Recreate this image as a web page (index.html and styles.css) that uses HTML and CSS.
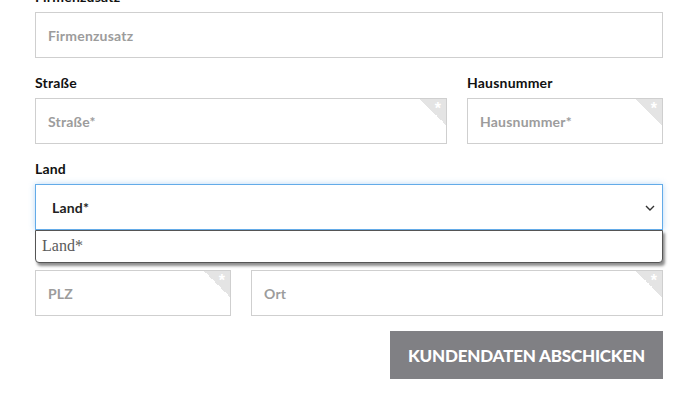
FILE: index.html
```html
<!DOCTYPE html>
<html lang="de">
<head>
    <meta charset="UTF-8">
    <meta name="viewport" content="width=device-width, initial-scale=1.0">
    <title>Kundendaten</title>
    <link rel="stylesheet" href="styles.css">
</head>
<body>
    <form class="customer-form">
        <div class="row">
            <div class="field">
                <label>Firmenzusatz</label>
                <div class="input-wrap">
                    <input type="text" placeholder="Firmenzusatz">
                </div>
            </div>
        </div>

        <div class="row split">
            <div class="field">
                <label>Straße</label>
                <div class="input-wrap">
                    <input type="text" placeholder="Straße*">
                    <span class="req">*</span>
                </div>
            </div>
            <div class="field">
                <label>Hausnummer</label>
                <div class="input-wrap">
                    <input type="text" placeholder="Hausnummer*">
                    <span class="req">*</span>
                </div>
            </div>
        </div>

        <div class="row">
            <div class="field">
                <label>Land</label>
                <div class="select-wrap">
                    <div class="select">
                        <span>Land*</span>
                        <svg class="chevron" width="10" height="6" viewBox="0 0 10 6">
                            <path d="M1 1 L5 5 L9 1" fill="none" stroke="#333" stroke-width="1.4"/>
                        </svg>
                    </div>
                    <div class="select-list">
                        <div class="option">Land*</div>
                    </div>
                </div>
            </div>
        </div>

        <div class="row split reverse">
            <div class="field">
                <label class="covered">PLZ</label>
                <div class="input-wrap">
                    <input type="text" placeholder="PLZ">
                    <span class="req">*</span>
                </div>
            </div>
            <div class="field">
                <label class="covered">Ort</label>
                <div class="input-wrap">
                    <input type="text" placeholder="Ort">
                    <span class="req">*</span>
                </div>
            </div>
        </div>

        <div class="actions">
            <button type="button" class="submit">Kundendaten abschicken</button>
        </div>
    </form>
</body>
</html>
```

FILE: styles.css
```css
body {
    margin: 0;
    background-color: #fff;
    font-family: 'Lato', 'Liberation Sans', sans-serif;
    color: #111;
}

.customer-form {
    width: 628px;
    margin: -13px 0 0 35px;
}

.row {
    margin-bottom: 15px;
}

.row.split {
    display: grid;
    grid-template-columns: 412px 196px;
    column-gap: 20px;
}

.row.split.reverse {
    grid-template-columns: 196px 412px;
}

.field label {
    display: block;
    font-size: 14px;
    font-weight: 700;
    line-height: 20px;
    margin-bottom: 5px;
    color: #111;
    letter-spacing: 0.2px;
}

/* these labels sit under the open select list */
.field label.covered {
    visibility: hidden;
}

.input-wrap {
    position: relative;
}

.input-wrap input {
    display: block;
    width: 100%;
    height: 46px;
    box-sizing: border-box;
    padding: 0 12px;
    border: 1px solid #cfcfcf;
    border-radius: 0;
    font-family: 'Lato', 'Liberation Sans', sans-serif;
    font-size: 14px;
    font-weight: 700;
    letter-spacing: 0.2px;
    color: #333;
    outline: none;
}

.input-wrap input::placeholder {
    color: #9c9c9c;
}

/* grey corner with the required star */
.req {
    position: absolute;
    top: 1px;
    right: 1px;
    width: 26px;
    height: 26px;
    background: linear-gradient(225deg, #e4e4e4 50%, transparent 50%);
    color: #fff;
    font-family: 'Liberation Sans', sans-serif;
    font-size: 16px;
    font-weight: 700;
    line-height: 19px;
    text-align: right;
    padding-right: 5px;
    box-sizing: border-box;
}

.select-wrap {
    position: relative;
}

.select {
    display: flex;
    align-items: center;
    justify-content: space-between;
    height: 46px;
    box-sizing: border-box;
    padding: 0 7px 0 16px;
    border: 1px solid #63abe8;
    box-shadow: 0 0 6px rgba(99, 171, 232, 0.45);
    font-size: 14px;
    font-weight: 700;
    letter-spacing: 0.2px;
    color: #222;
}

.chevron {
    margin-top: 2px;
}

.select-list {
    position: absolute;
    top: 100%;
    left: 0;
    right: 0;
    z-index: 2;
    height: 33px;
    box-sizing: border-box;
    background-color: #fff;
    border: 1px solid #555;
    border-radius: 0 0 4px 4px;
    box-shadow: 2px 3px 3px rgba(0, 0, 0, 0.45);
}

.option {
    padding: 6px 6px 0;
    font-family: 'Liberation Serif', serif;
    font-size: 16px;
    color: #5a5a5a;
}

.actions {
    display: flex;
    justify-content: flex-end;
}

.submit {
    width: 273px;
    height: 48px;
    border: none;
    background-color: #808084;
    color: #fff;
    font-family: 'Lato', 'Liberation Sans', sans-serif;
    font-size: 17px;
    font-weight: 900;
    letter-spacing: -0.2px;
    text-transform: uppercase;
    cursor: pointer;
}
```
